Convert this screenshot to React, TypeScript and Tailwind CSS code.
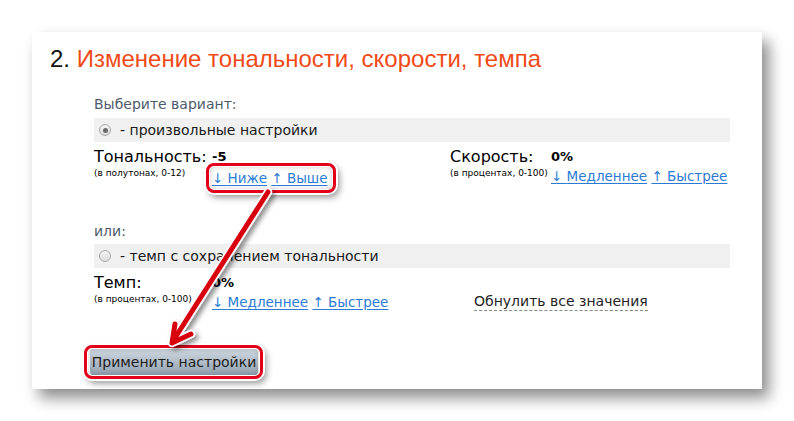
import React from 'react'

const body = { fontFamily: '"DejaVu Sans", Verdana, sans-serif' }

function Radio({ checked }: { checked?: boolean }) {
  return (
    <span className="ml-[5px] mr-[9px] flex h-[12px] w-[12px] items-center justify-center rounded-full border border-[#a9a9a9] bg-gradient-to-b from-[#f4f4f4] to-[#dcdcdc]">
      {checked && <span className="h-[5px] w-[5px] rounded-full bg-[#6a6a6a]" />}
    </span>
  )
}

function Links({ down, up }: { down: string; up: string }) {
  return (
    <span className="whitespace-nowrap text-[13.5px] leading-[20px] text-[#2b7bd6]">
      <a className="underline underline-offset-2">↓ {down}</a>{' '}
      <a className="underline underline-offset-2">↑ {up}</a>
    </span>
  )
}

// red callout frame drawn on top of the thing it marks
function Callout({ className }: { className: string }) {
  return (
    <span
      aria-hidden
      className={`pointer-events-none absolute rounded-[8px] border-[3px] border-[#e3001b] shadow-[0_0_0_2px_#fff,3px_4px_7px_rgba(0,0,0,0.45),inset_0_0_0_1px_#fff,inset_0_0_6px_rgba(0,0,0,0.25)] ${className}`}
    />
  )
}

export default function App() {
  return (
    <div className="h-[421px] w-[794px] overflow-hidden bg-white pt-[32px] pl-[32px]">
      <div
        className="relative h-[357px] w-[730px] bg-white shadow-[7px_9px_14px_rgba(0,0,0,0.45)]"
        style={body}
      >
        {/* title */}
        <h2
          className="pt-[13px] pl-[18px] text-[24px] leading-[28px] text-[#f04a16]"
          style={{ fontFamily: '"Liberation Sans", Arial, sans-serif' }}
        >
          <span className="text-[#111]">2. </span>Изменение тональности, скорости, темпа
        </h2>

        <div className="pl-[62px] pr-[32px] text-[#1a1a1a]">
          <div className="mt-[21px] text-[14px] leading-[20px] text-[#4d5b6a]">Выберите вариант:</div>

          <div className="mt-[4px] flex h-[24px] items-center bg-[#f0f0f0] text-[14px]">
            <Radio checked />
            <span>- произвольные настройки</span>
          </div>

          <div className="mt-[6px] flex items-start">
            <div className="grid w-[356px] grid-cols-[118px_auto] content-start">
              <span className="text-[16px] leading-[18px] text-black">Тональность:</span>
              <span className="text-[13px] font-bold leading-[18px] text-black">-5</span>
              <span className="text-[9px] leading-[14px] text-black">(в полутонах, 0-12)</span>
              <span className="relative w-fit">
                <Links down="Ниже" up="Выше" />
                <Callout className="-top-[3px] -bottom-[3px] -left-[6px] -right-[8px]" />
              </span>
            </div>
            <div className="grid grid-cols-[101px_auto] content-start">
              <span className="text-[16px] leading-[18px] text-black">Скорость:</span>
              <span className="text-[13px] font-bold leading-[18px] text-black">0%</span>
              <span className="text-[9px] leading-[14px] text-black">(в процентах, 0-100)</span>
              <Links down="Медленнее" up="Быстрее" />
            </div>
          </div>

          <div className="mt-[31px] text-[14px] leading-[20px] text-[#4d5b6a]">или:</div>

          <div className="mt-[3px] flex h-[24px] items-center bg-[#f0f0f0] text-[14px]">
            <Radio />
            <span>- темп с сохранением тональности</span>
          </div>

          <div className="mt-[6px] flex items-end">
            <div className="grid w-[380px] grid-cols-[118px_auto] content-start">
              <span className="text-[16px] leading-[18px] text-black">Темп:</span>
              <span className="text-[13px] font-bold leading-[18px] text-black">0%</span>
              <span className="text-[9px] leading-[14px] text-black">(в процентах, 0-100)</span>
              <Links down="Медленнее" up="Быстрее" />
            </div>
            <span className="mb-[1px] border-b border-dashed border-[#888] text-[14px] leading-[18px] text-[#222]">
              Обнулить все значения
            </span>
          </div>
        </div>

        <div className="mt-[36px] pl-[58px]">
          <span className="relative inline-block align-top">
            <button className="block h-[28px] w-[168px] rounded-[5px] bg-gradient-to-b from-[#d3dbe3] via-[#b0bcc8] to-[#909eae] text-[14px] text-[#1c1c1c]">
              Применить настройки
            </button>
            <Callout className="-top-[3px] -bottom-[3px] -left-[6px] -right-[5px]" />
          </span>
        </div>

        {/* pointer arrow from the links to the button */}
        <svg
          aria-hidden
          className="pointer-events-none absolute left-0 top-0"
          width="730"
          height="357"
          viewBox="0 0 730 357"
        >
          <defs>
            <filter id="sh" x="-20%" y="-20%" width="140%" height="140%">
              <feDropShadow dx="3" dy="3" stdDeviation="2.5" floodColor="#000" floodOpacity="0.45" />
            </filter>
          </defs>
          <g filter="url(#sh)" fill="none" strokeLinecap="round" strokeLinejoin="round">
            <path d="M236 160 L141 309 M143 292 L140 311 L159 302" stroke="#fff" strokeWidth="8.5" />
            <path d="M236 160 L141 309 M143 292 L140 311 L159 302" stroke="#d9000f" strokeWidth="5" />
          </g>
        </svg>
      </div>
    </div>
  )
}
